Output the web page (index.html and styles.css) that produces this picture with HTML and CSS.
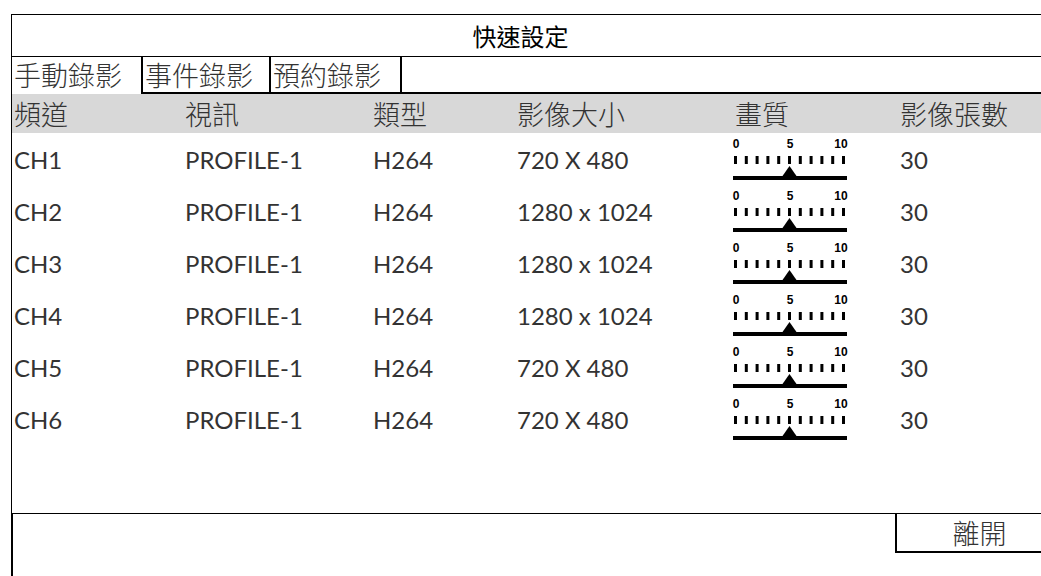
FILE: index.html
```html
<!DOCTYPE html>
<html>
<head>
<title>快速設定</title>
<link rel="stylesheet" href="styles.css">
</head>
<body>

<div class="panel">
  <div class="title">快速設定</div>

  <div class="tabs">
    <div class="tab active">手動錄影</div>
    <div class="tab">事件錄影</div>
    <div class="tab">預約錄影</div>
  </div>

  <div class="grid head">
    <div>頻道</div>
    <div>視訊</div>
    <div>類型</div>
    <div>影像大小</div>
    <div>畫質</div>
    <div>影像張數</div>
  </div>

  <div class="rows" id="rows"></div>
</div>

<div class="footer">
  <div class="spacer"></div>
  <div class="btn">離開</div>
</div>

<script>
var channels = [
  ['CH1', 'PROFILE-1', 'H264', '720 X 480', 5, '30'],
  ['CH2', 'PROFILE-1', 'H264', '1280 x 1024', 5, '30'],
  ['CH3', 'PROFILE-1', 'H264', '1280 x 1024', 5, '30'],
  ['CH4', 'PROFILE-1', 'H264', '1280 x 1024', 5, '30'],
  ['CH5', 'PROFILE-1', 'H264', '720 X 480', 5, '30'],
  ['CH6', 'PROFILE-1', 'H264', '720 X 480', 5, '30']
];

function scale(q) {
  var s = '<svg class="scale" width="120" height="44" viewBox="0 0 120 44">';
  s += '<text x="5" y="10">0</text><text x="59" y="10">5</text><text x="110" y="10">10</text>';
  for (var i = 0; i <= 10; i++) {
    s += '<rect x="' + (3 + i * 10.8).toFixed(1) + '" y="18" width="3" height="8"/>';
  }
  var cx = 4.5 + q * 10.8;
  s += '<rect x="2" y="38" width="114" height="4"/>';
  s += '<polygon points="' + cx + ',28 ' + (cx - 7) + ',38 ' + (cx + 7) + ',38"/>';
  return s + '</svg>';
}

var html = '';
channels.forEach(function (c) {
  html += '<div class="grid row">' +
    '<div>' + c[0] + '</div>' +
    '<div>' + c[1] + '</div>' +
    '<div>' + c[2] + '</div>' +
    '<div>' + c[3] + '</div>' +
    '<div>' + scale(c[4]) + '</div>' +
    '<div>' + c[5] + '</div>' +
    '</div>';
});
document.getElementById('rows').innerHTML = html;
</script>
</body>
</html>
```

FILE: styles.css
```css
html, body {
  margin: 0;
  padding: 0;
  overflow: hidden;
  background: #fff;
}

body {
  font-family: "Noto Sans CJK TC", sans-serif;
  color: #222;
}

.panel {
  margin: 14px 0 0 11px;
  border-top: 1px solid #000;
  border-left: 1px solid #000;
  height: 498px;
}

.title {
  height: 41px;
  line-height: 41px;
  border-bottom: 1px solid #000;
  text-align: center;
  font-size: 24px;
  color: #000;
  padding-right: 12px;
}

.tabs {
  display: flex;
  height: 35px;
  border-bottom: 2px solid #000;
}

.tab {
  font-size: 27px;
  font-weight: 300;
  line-height: 35px;
  color: #333;
  border-right: 2px solid #000;
  padding-left: 2px;
}

.tab:nth-child(1) { width: 127px; }
.tab:nth-child(2) { width: 124px; }
.tab:nth-child(3) { width: 127px; }

.tab.active {
  height: 37px;
  background: #fff;
  position: relative;
  z-index: 1;
}

.grid {
  display: grid;
  grid-template-columns: 171px 188px 144px 218px 165px 1fr;
  padding-left: 2px;
  align-items: center;
}

.head {
  height: 39px;
  background: #d8d8d8;
  font-size: 27px;
  font-weight: 300;
  color: #333;
}

.row {
  height: 52px;
  font-family: "Lato", "Noto Sans", sans-serif;
  font-size: 24px;
  color: #333;
}

.scale {
  display: block;
  margin-left: -4px;
  margin-top: 2px;
}

.scale text {
  font-family: "Liberation Sans", sans-serif;
  font-weight: bold;
  font-size: 12px;
  text-anchor: middle;
}

.footer {
  display: flex;
  margin-left: 11px;
  border-top: 1px solid #000;
  border-left: 2px solid #000;
  height: 80px;
}

.spacer {
  flex-shrink: 0;
  width: 882px;
}

.btn {
  flex-shrink: 0;
  width: 165px;
  height: 37px;
  border-left: 2px solid #000;
  border-bottom: 2px solid #000;
  font-size: 27px;
  font-weight: 300;
  line-height: 37px;
  text-align: center;
  color: #333;
}
```
